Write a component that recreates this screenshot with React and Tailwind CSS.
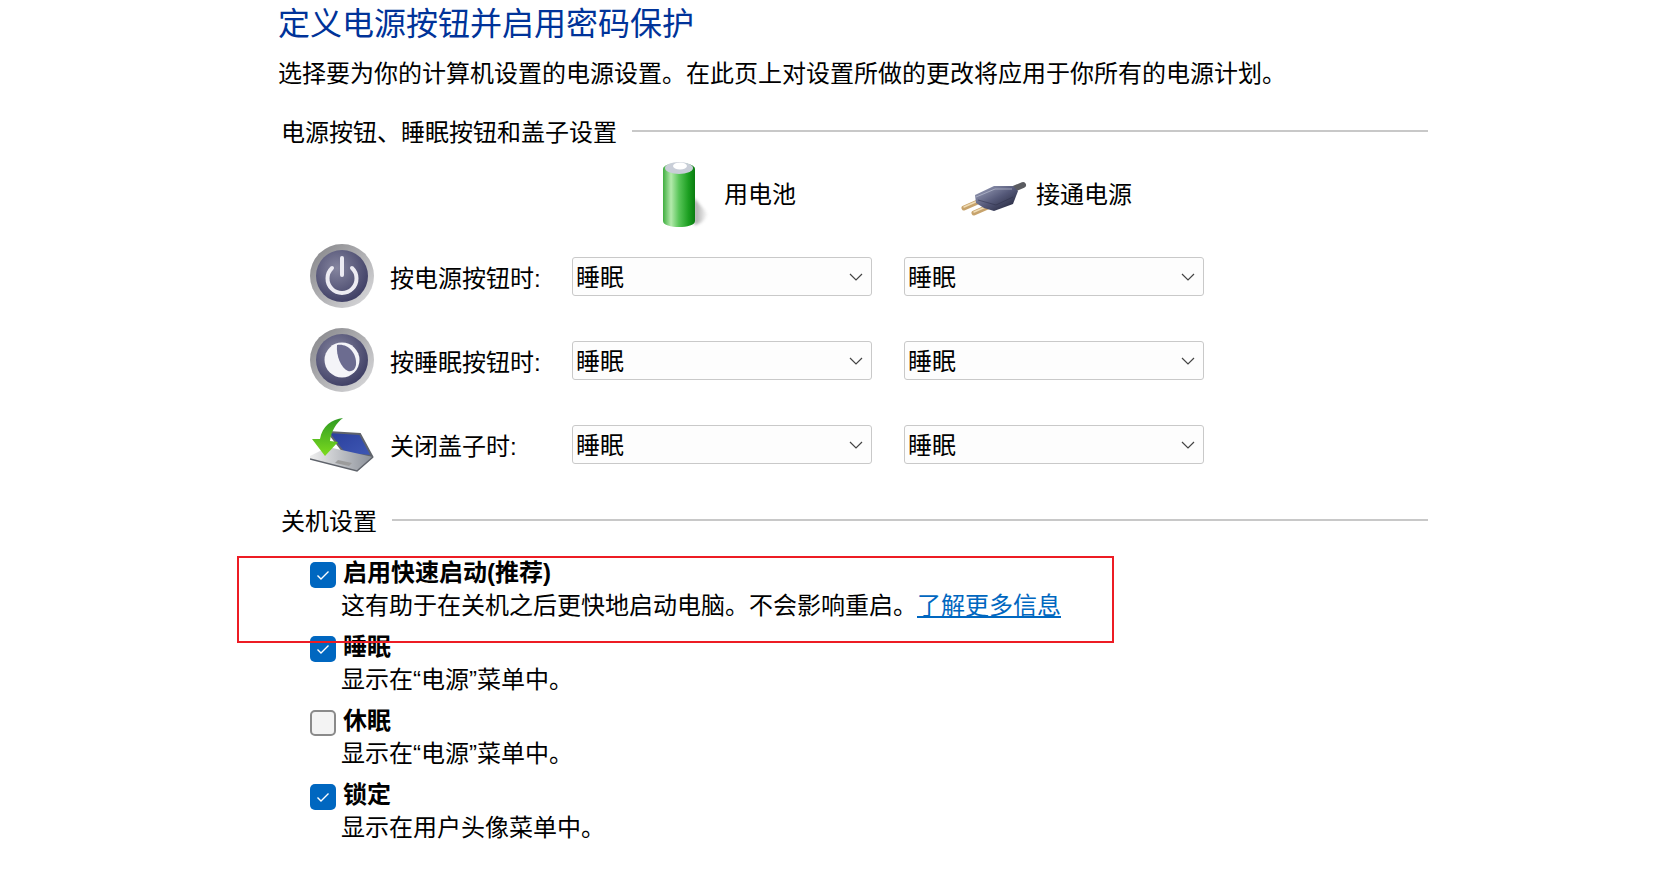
import React from "react";

const BatteryIcon = () => (
  <svg width="50" height="70" viewBox="0 0 50 70" className="shrink-0">
    <defs>
      <linearGradient id="batBody" x1="0" x2="1" y1="0" y2="0">
        <stop offset="0" stopColor="#3fae3f" />
        <stop offset="0.25" stopColor="#b4eaac" />
        <stop offset="0.5" stopColor="#58c558" />
        <stop offset="0.8" stopColor="#1b9e20" />
        <stop offset="1" stopColor="#0a7c10" />
      </linearGradient>
      <linearGradient id="batShadow" x1="0" x2="1" y1="0" y2="0">
        <stop offset="0" stopColor="#8f8f8f" />
        <stop offset="1" stopColor="#ffffff" />
      </linearGradient>
      <filter id="batBlur">
        <feGaussianBlur stdDeviation="1.5" />
      </filter>
    </defs>
    <path d="M32 38 L46 54 Q40 65 32 65 Z" fill="url(#batShadow)" opacity="0.8" filter="url(#batBlur)" />
    <path d="M1 9 C1 1 33 1 33 9 V61 C33 69 1 69 1 61 Z" fill="url(#batBody)" />
    <ellipse cx="17" cy="8" rx="14" ry="6" fill="#c9ced8" />
    <ellipse cx="18" cy="6" rx="7" ry="3.5" fill="#ffffff" />
  </svg>
);

const PlugIcon = () => (
  <svg width="70" height="44" viewBox="0 0 70 44" className="shrink-0">
    <defs>
      <linearGradient id="plugBody" x1="0" x2="1" y1="0" y2="1">
        <stop offset="0" stopColor="#a4a9c2" />
        <stop offset="0.5" stopColor="#555979" />
        <stop offset="1" stopColor="#1a1c30" />
      </linearGradient>
    </defs>
    <path d="M52 17 L64 12" stroke="#5a5b60" strokeWidth="6" strokeLinecap="round" />
    <path d="M5 35 L21 28" stroke="#c7a36c" strokeWidth="5" strokeLinecap="round" />
    <path d="M15 40 L31 33" stroke="#c7a36c" strokeWidth="5" strokeLinecap="round" />
    <path d="M5 34 L21 27" stroke="#f0dcb4" strokeWidth="1.5" strokeLinecap="round" />
    <path d="M15 39 L31 32" stroke="#f0dcb4" strokeWidth="1.5" strokeLinecap="round" />
    <path d="M16 22 L35 13 L54 13 L59 18 L54 31 L35 38 L25 35 L17 30 Z" fill="url(#plugBody)" />
    <path d="M17 24 L36 16 L53 16" fill="none" stroke="#b9bdd0" strokeWidth="1" opacity="0.7" />
    <path d="M19 27 L37 32 L54 24" fill="none" stroke="#2c2e48" strokeWidth="1" opacity="0.5" />
  </svg>
);

const RoundButton = ({ id, children }) => (
  <svg width="64" height="64" viewBox="0 0 64 64" className="shrink-0">
    <defs>
      <linearGradient id={`${id}Rim`} x1="0" x2="1" y1="0" y2="1">
        <stop offset="0" stopColor="#828286" />
        <stop offset="1" stopColor="#dedee0" />
      </linearGradient>
      <radialGradient id={`${id}Face`} cx="0.4" cy="0.35" r="0.75">
        <stop offset="0" stopColor="#85859f" />
        <stop offset="1" stopColor="#38385f" />
      </radialGradient>
    </defs>
    <circle cx="32" cy="32" r="32" fill={`url(#${id}Rim)`} />
    <circle cx="32" cy="32" r="26" fill={`url(#${id}Face)`} />
    {children}
  </svg>
);

const PowerIcon = () => (
  <RoundButton id="power">
    <path d="M22 24 A14.5 14.5 0 1 0 42 24" fill="none" stroke="#ecebf2" strokeWidth="4" strokeLinecap="round" />
    <path d="M32 14 V31" stroke="#ecebf2" strokeWidth="4" strokeLinecap="round" />
  </RoundButton>
);

const SleepIcon = () => (
  <RoundButton id="sleep">
    <circle cx="32" cy="32" r="17.5" fill="#f4f4f8" />
    <path d="M27 17 C37 15 47 24 46 37 C45 42 42 44 38 43 C31 40 26 28 27 17 Z" fill="#6c6c90" />
  </RoundButton>
);

const LidIcon = () => (
  <svg width="64" height="56" viewBox="0 0 64 56" className="shrink-0">
    <defs>
      <linearGradient id="lidScreen" x1="0" x2="1" y1="0" y2="1">
        <stop offset="0" stopColor="#2a3f9c" />
        <stop offset="1" stopColor="#3f58b4" />
      </linearGradient>
      <linearGradient id="lidBase" x1="0" x2="1" y1="0" y2="0">
        <stop offset="0" stopColor="#efefef" />
        <stop offset="1" stopColor="#8a8f98" />
      </linearGradient>
      <linearGradient id="lidArrow" x1="0" x2="0" y1="0" y2="1">
        <stop offset="0" stopColor="#2f9a22" />
        <stop offset="1" stopColor="#7ddc1e" />
      </linearGradient>
    </defs>
    <path d="M18 16 L50 18 L62 40 L35 38 Z" fill="url(#lidScreen)" stroke="#5f636b" strokeWidth="2" />
    <path d="M0 40 L18 31 L63 41 L47 55 L0 43 Z" fill="url(#lidBase)" />
    <path d="M0 43 L47 55 L63 41" fill="none" stroke="#5f636b" strokeWidth="1.5" />
    <path d="M28 44 L42 47 L39 50 L25 47 Z" fill="#9c9c9c" />
    <path d="M33 2 C22 3 12 10 10 23 L2 23 L15 40 L28 26 L20 25 C21 16 26 7 33 2 Z" fill="url(#lidArrow)" />
  </svg>
);

const Dropdown = () => (
  <div className="flex h-[39px] w-[300px] items-center justify-between rounded-[3px] border border-[#c9c9c9] bg-[#fdfdfd] pl-[3px] pr-[8px]">
    <span className="pt-[4px]">睡眠</span>
    <svg width="14" height="8" viewBox="0 0 14 8" className="mt-[1px]">
      <path d="M1 1 L7 7 L13 1" fill="none" stroke="#444" strokeWidth="1.2" />
    </svg>
  </div>
);

const SectionHeader = ({ children, className }) => (
  <div className={`flex items-center pl-[3px] pr-[242px] ${className}`}>
    <span className="pt-[2px]">{children}</span>
    <div className="ml-[15px] mb-[3px] h-0.5 flex-1 bg-[#c8c8c8]" />
  </div>
);

const ActionRow = ({ icon, label }) => (
  <div className="flex h-[84px] items-center pl-[32px]">
    <div className="flex w-[64px] justify-center">{icon}</div>
    <span className="ml-[16px] w-[182px] pt-[6px]">{label}</span>
    <Dropdown />
    <div className="w-[32px]" />
    <Dropdown />
  </div>
);

const CheckRow = ({ checked, title, children }) => (
  <div className="flex h-[74px] pl-[32px]">
    <div
      className={`mt-[7px] flex h-[26px] w-[26px] shrink-0 items-center justify-center rounded-[5px] ${
        checked ? "bg-[#0067c0]" : "border-2 border-[#8a8a8a] bg-[#f3f3f3]"
      }`}
    >
      {checked && (
        <svg width="14" height="11" viewBox="0 0 14 11">
          <path d="M1.5 5.5 L5 9 L12.5 1.5" fill="none" stroke="#fff" strokeWidth="1.4" />
        </svg>
      )}
    </div>
    <div className="ml-[5px] pt-[2px]">
      <div className="ml-0.5 h-[33px] font-bold leading-[32px]">{title}</div>
      <div className="leading-[32px]">{children}</div>
    </div>
  </div>
);

export default function App() {
  return (
    <div className="relative h-[879px] w-[1670px] overflow-hidden bg-white pl-[278px] font-['Liberation_Sans','Noto_Sans_CJK_SC',sans-serif] text-[24px] text-black">
      <h1 className="h-[47px] text-[32px] leading-[49px] text-[#003399]">定义电源按钮并启用密码保护</h1>
      <p className="h-[53px] leading-[53px]">选择要为你的计算机设置的电源设置。在此页上对设置所做的更改将应用于你所有的电源计划。</p>
      <SectionHeader className="h-[64px]">电源按钮、睡眠按钮和盖子设置</SectionHeader>
      <div className="flex h-[70px] items-center pb-[9px] pl-[384px]">
        <BatteryIcon />
        <span className="ml-[12px] w-[235px]">用电池</span>
        <PlugIcon />
        <span className="ml-[7px]">接通电源</span>
      </div>
      <ActionRow icon={<PowerIcon />} label="按电源按钮时:" />
      <ActionRow icon={<SleepIcon />} label="按睡眠按钮时:" />
      <ActionRow icon={<LidIcon />} label="关闭盖子时:" />
      <SectionHeader className="mt-[5px] h-[60px]">关机设置</SectionHeader>
      <div className="mt-[4px]">
        <CheckRow checked title="启用快速启动(推荐)">
          这有助于在关机之后更快地启动电脑。不会影响重启。
          <span className="text-[#0067c0] underline">了解更多信息</span>
        </CheckRow>
        <CheckRow checked title="睡眠">显示在“电源”菜单中。</CheckRow>
        <CheckRow title="休眠">显示在“电源”菜单中。</CheckRow>
        <CheckRow checked title="锁定">显示在用户头像菜单中。</CheckRow>
      </div>
      <div className="absolute left-[237px] top-[556px] h-[87px] w-[877px] border-2 border-[#ed1c24]" />
    </div>
  );
}
